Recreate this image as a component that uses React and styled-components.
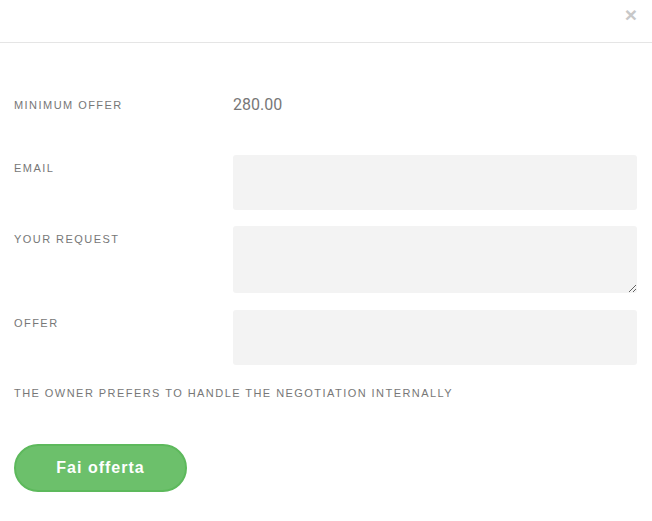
import React from 'react'
import styled, { createGlobalStyle } from 'styled-components'

const GlobalStyle = createGlobalStyle`
  * { box-sizing: border-box; }
  body {
    margin: 0;
    background: #fff;
    font-family: "Liberation Sans", Arial, sans-serif;
  }
`

const Modal = styled.div`
  width: 652px;
  min-height: 521px;
  background: #fff;
`

const Header = styled.div`
  height: 43px;
  border-bottom: 1px solid #e5e5e5;
  display: flex;
  justify-content: flex-end;
  align-items: flex-start;
  padding: 4px 15px 0 0;
`

const Close = styled.button`
  border: 0;
  background: none;
  padding: 0;
  font-family: "Liberation Sans", Arial, sans-serif;
  font-size: 21px;
  font-weight: 700;
  line-height: 1;
  color: #c8c8c8;
  cursor: pointer;
`

const Body = styled.form`
  padding: 52px 15px 0 14px;
`

const Row = styled.div`
  display: grid;
  grid-template-columns: 219px 1fr;
  align-items: start;
  margin-bottom: ${p => p.$gap || 16}px;
`

const Label = styled.label`
  display: block;
  font-size: 11px;
  line-height: 20px;
  letter-spacing: 1.45px;
  text-transform: uppercase;
  color: #777;
  padding-top: ${p => p.$offset || 0}px;
`

const Value = styled.div`
  font-family: Roboto, "Liberation Sans", sans-serif;
  font-size: 16px;
  line-height: 20px;
  color: #777;
`

const Input = styled.input`
  display: block;
  width: 100%;
  height: 55px;
  border: 0;
  border-radius: 3px;
  background: #f3f3f3;
  outline: none;
`

const TextArea = styled.textarea`
  display: block;
  width: 100%;
  height: 67px;
  border: 0;
  border-radius: 3px;
  background: #f3f3f3;
  outline: none;
  resize: vertical;
`

const Notice = styled.p`
  margin: 0 0 41px;
  font-size: 11px;
  line-height: 20px;
  letter-spacing: 1.45px;
  text-transform: uppercase;
  color: #777;
`

const SubmitButton = styled.button`
  width: 173px;
  height: 48px;
  border-radius: 24px;
  border: 2px solid #5db95c;
  background: #6cc06b;
  color: #fff;
  font-family: "Liberation Sans", Arial, sans-serif;
  font-size: 16px;
  font-weight: 700;
  letter-spacing: 1px;
  cursor: pointer;
`

export default function App() {
  return (
    <>
      <GlobalStyle />
      <Modal>
        <Header>
          <Close type="button" aria-label="Close">×</Close>
        </Header>
        <Body onSubmit={e => e.preventDefault()}>
          <Row $gap={40}>
            <Label>Minimum offer</Label>
            <Value>280.00</Value>
          </Row>
          <Row>
            <Label $offset={3}>Email</Label>
            <Input type="email" />
          </Row>
          <Row $gap={17}>
            <Label $offset={3}>Your request</Label>
            <TextArea />
          </Row>
          <Row $gap={18}>
            <Label $offset={3}>Offer</Label>
            <Input type="text" />
          </Row>
          <Notice>The owner prefers to handle the negotiation internally</Notice>
          <SubmitButton type="submit">Fai offerta</SubmitButton>
        </Body>
      </Modal>
    </>
  )
}
